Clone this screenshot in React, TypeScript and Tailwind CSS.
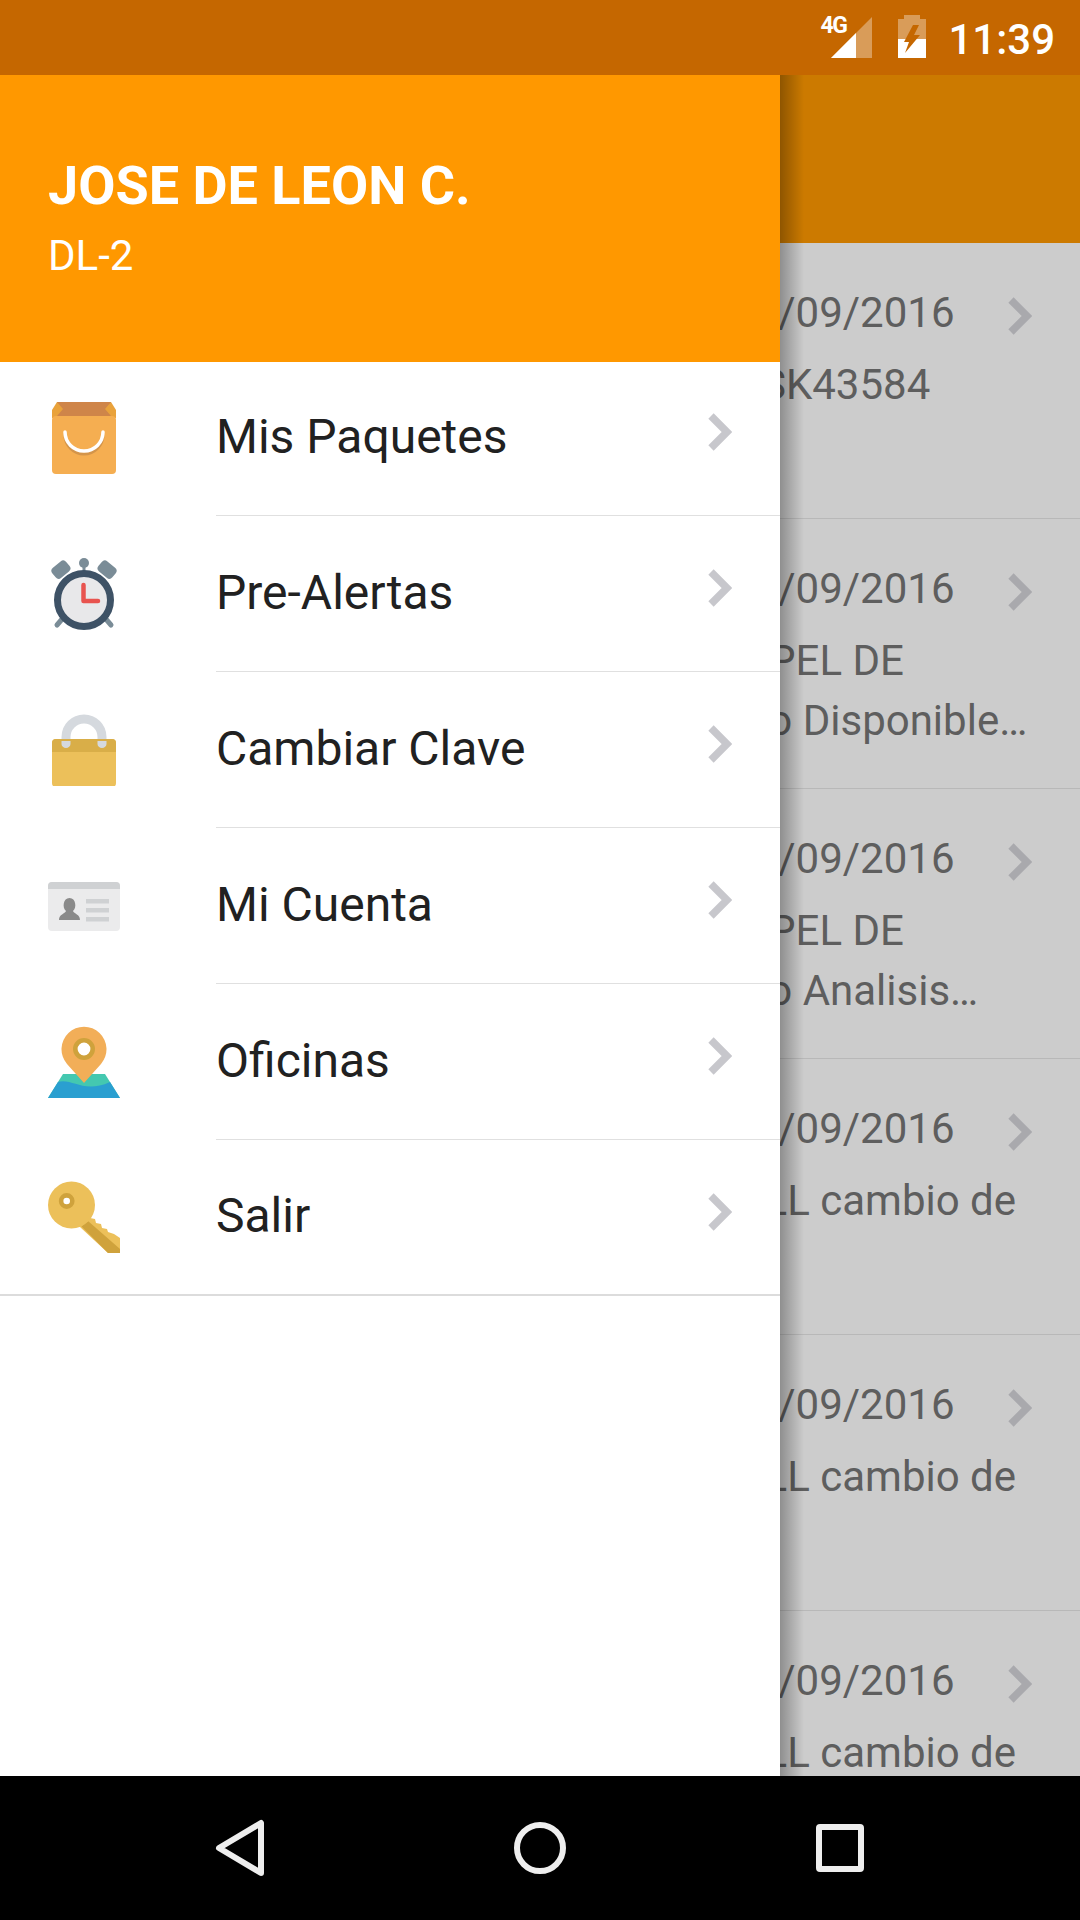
const menuItems = [
  { name: "Mis Paquetes", icon: <BagIcon /> },
  { name: "Pre-Alertas", icon: <ClockIcon /> },
  { name: "Cambiar Clave", icon: <LockIcon /> },
  { name: "Mi Cuenta", icon: <CardIcon /> },
  { name: "Oficinas", icon: <MapIcon /> },
  { name: "Salir", icon: <KeyIcon /> },
];

const date = { text: "16/09/2016", className: "" };
const bill = { text: "BILL cambio de", className: "mt-[12px] -ml-[4px]" };
const papel = { text: "PAPEL DE", className: "mt-[12px] -ml-[13px]" };

const listRows = [
  { height: "h-[276px]", lines: [date, { text: "HSK43584", className: "mt-[12px]" }] },
  { height: "h-[270px]", lines: [date, papel, { text: "cto Disponible…", className: "ml-[2px]" }] },
  { height: "h-[270px]", lines: [date, papel, { text: "cto Analisis…", className: "ml-[2px]" }] },
  { height: "h-[276px]", lines: [date, bill] },
  { height: "h-[276px]", lines: [date, bill] },
  { height: "h-[276px]", lines: [date, bill] },
];

function BagIcon() {
  return (
    <svg width="72" height="72" viewBox="0 0 72 72">
      <polygon points="9,0 4,8 4,16 68,16 68,8 63,0" fill="#e9a23b" />
      <polygon points="9,0 63,0 57,7 63,14 9,14 15,7" fill="#cf8549" />
      <rect x="4" y="14" width="64" height="58" rx="4" fill="#f5ae51" />
      <path d="M17 33 A19 19 0 0 0 55 33" fill="none" stroke="#d4954a" strokeWidth="3" />
      <path d="M17 30 A19 19 0 0 0 55 30" fill="none" stroke="#ffffff" strokeWidth="3.5" strokeLinecap="round" />
    </svg>
  );
}

function ClockIcon() {
  return (
    <svg width="72" height="72" viewBox="0 0 72 72">
      <rect x="27" y="-9" width="18" height="13" rx="4" transform="rotate(-40 36 36) translate(-2 5)" fill="#7a8c97" />
      <rect x="27" y="-9" width="18" height="13" rx="4" transform="rotate(40 36 36) translate(2 5)" fill="#7a8c97" />
      <circle cx="36" cy="5" r="5" fill="#7a8c97" />
      <rect x="34.5" y="6" width="3" height="8" fill="#7a8c97" />
      <path d="M15 60 L9 67 M57 60 L63 67" stroke="#7a8c97" strokeWidth="5" strokeLinecap="round" />
      <circle cx="36" cy="42" r="26.5" fill="#e8e8ea" stroke="#3e5266" strokeWidth="7" />
      <path d="M35.5 27 V43 H50" fill="none" stroke="#e8534f" strokeWidth="4.5" strokeLinecap="round" strokeLinejoin="round" />
    </svg>
  );
}

function LockIcon() {
  return (
    <svg width="72" height="72" viewBox="0 0 72 72">
      <path d="M18 36 V23 A18 18 0 0 1 54 23 V36" fill="none" stroke="#d5d9de" strokeWidth="9" />
      <rect x="4" y="25" width="64" height="48" rx="4" fill="#ecc05a" />
      <path d="M4 38 V29 A4 4 0 0 1 8 25 H64 A4 4 0 0 1 68 29 V38 Z" fill="#d9ae48" />
      <path d="M13.5 27 V30 A4.5 4 0 0 0 22.5 30 V27 Z M49.5 27 V30 A4.5 4 0 0 0 58.5 30 V27 Z" fill="#d5d9de" />
    </svg>
  );
}

function CardIcon() {
  return (
    <svg width="72" height="72" viewBox="0 0 72 72">
      <rect x="0" y="12" width="72" height="49" rx="4" fill="#ebebec" />
      <path d="M0 19 V16 A4 4 0 0 1 4 12 H68 A4 4 0 0 1 72 16 V19 Z" fill="#cfd1d3" />
      <path d="M11 50 C11 44 17 44 18 41 C14 38 15 28 21.5 28 C28 28 29 38 25 41 C26 44 32 44 32 50 Z" fill="#8a8a8a" />
      <rect x="38" y="29" width="23" height="4.5" fill="#cfd1d3" />
      <rect x="38" y="38" width="23" height="4.5" fill="#cfd1d3" />
      <rect x="38" y="47" width="23" height="4.5" fill="#cfd1d3" />
    </svg>
  );
}

function MapIcon() {
  return (
    <svg width="72" height="72" viewBox="0 0 72 72">
      <polygon points="15,48 57,48 72,72 0,72" fill="#44c8b0" />
      <path d="M0 72 L10 56 C24 52 36 68 62 56 L72 72 Z" fill="#2a9fd0" />
      <path d="M36 57 L19 38 A22.5 22.5 0 1 1 53 38 Z" fill="#f2ae58" />
      <circle cx="36" cy="23" r="8.7" fill="#ffffff" stroke="#cfa23c" strokeWidth="4.6" />
    </svg>
  );
}

function KeyIcon() {
  return (
    <svg width="72" height="72" viewBox="0 0 72 72">
      <polygon points="36,31 42,34 42,37 47,38 48,42 53,43 54,47 59,48 60,51 66,53 72,57 72,72 60,72 32,46" fill="#ecc05a" />
      <polygon points="33.5,45.5 40,40 72,68 72,72 60,72" fill="#cfa23c" />
      <circle cx="23.5" cy="24" r="23.5" fill="#ecc05a" />
      <circle cx="18.7" cy="20" r="5.6" fill="#ffffff" stroke="#cfa23c" strokeWidth="4.6" />
    </svg>
  );
}

const Chevron = ({ color }: { color: string }) => (
  <svg width="24" height="38" viewBox="0 0 24 38">
    <path d="M3 3 L19 19 L3 35" fill="none" stroke={color} strokeWidth="7.5" />
  </svg>
);

const StatusIcons = () => (
  <div className="flex items-start">
    <div className="relative w-[52px] h-[58px]">
      <span className="absolute left-[-11px] top-[13px] text-[23px] leading-[26px] font-bold text-white tracking-[-1.5px]">
        4G
      </span>
      <svg className="absolute left-0 top-[17px]" width="42" height="41" viewBox="0 0 42 41">
        <polygon points="0,41 41,0 41,41" fill="#ffffff" fillOpacity="0.35" />
        <polygon points="0,41 25,16 25,41" fill="#ffffff" />
      </svg>
    </div>
    <svg className="mt-[15px] ml-[15px]" width="28" height="43" viewBox="0 0 28 43">
      <path d="M6 0 H22 V4 H28 V24 H0 V4 H6 Z" fill="#ffffff" fillOpacity="0.35" />
      <path d="M0 24 H28 V43 H0 Z" fill="#ffffff" />
      <path d="M15 10 L6 27 H11 L7 38 L22 20 H16 L21 10 Z" fill="#c56700" />
    </svg>
  </div>
);

export default function App() {
  return (
    <div className="w-[1080px] h-[1920px] flex flex-col overflow-hidden font-['Roboto',sans-serif]">
      {/* Status bar */}
      <div className="h-[75px] shrink-0 bg-[#c56700] flex justify-end pr-[25px]">
        <StatusIcons />
        <span className="ml-[22px] mt-[16px] text-[42px] leading-[48px] font-medium text-white">11:39</span>
      </div>

      <div className="relative flex-1 overflow-hidden bg-[#cccccc]">
        {/* App content behind the drawer */}
        <div className="h-[168px] bg-[#cc7a00]" />
        {listRows.map((row, i) => (
          <div key={i} className={`${row.height} box-border border-b border-[#b8b8b8] pl-[731px] pr-[48px] pt-[40px] flex`}>
            <div className="flex-1 w-0 text-[42px] leading-[60px] text-[#5e5e5e] whitespace-nowrap">
              {row.lines.map((line, j) => (
                <div key={j} className={line.className}>
                  {line.text}
                </div>
              ))}
            </div>
            <div className="mt-[14px]">
              <Chevron color="#a9a9ad" />
            </div>
          </div>
        ))}

        {/* Drawer shadow */}
        <div className="absolute top-0 bottom-0 left-[780px] w-[24px] bg-gradient-to-r from-black/30 to-transparent" />

        {/* Drawer */}
        <div className="absolute top-0 bottom-0 left-0 w-[780px] bg-white flex flex-col">
          <div className="h-[287px] shrink-0 bg-[#ff9800] pl-[48px] pt-[79px] text-white">
            <div className="text-[54px] leading-[64px] font-bold">JOSE DE LEON C.</div>
            <div className="mt-[14px] text-[42px] leading-[48px]">DL-2</div>
          </div>
          <div className="-mt-[2px]">
            {menuItems.map((item, i) => (
              <div
                key={item.name}
                className={`h-[156px] box-border flex items-center relative ${i === menuItems.length - 1 ? "border-b-2 border-[#dcdcdc]" : ""}`}
              >
                <div className="ml-[48px] -mt-[1px] w-[72px] h-[72px]">{item.icon}</div>
                <div className={`ml-[96px] flex-1 h-full box-border flex items-center justify-between pr-[48px] pb-[2px] ${i === menuItems.length - 1 ? "" : "border-b border-[#e0e0e0]"}`}>
                  <span className="text-[48px] leading-[56px] text-[#212121]">{item.name}</span>
                  <div className="-mt-[9px]">
                    <Chevron color="#c7c7cc" />
                  </div>
                </div>
              </div>
            ))}
          </div>
        </div>
      </div>

      {/* Nav bar */}
      <div className="h-[144px] shrink-0 bg-black flex justify-center items-center">
        <div className="w-[300px] flex justify-center">
          <svg width="54" height="60" viewBox="0 0 54 60">
            <path d="M48 5 V55 L6 30 Z" fill="none" stroke="#eeeeee" strokeWidth="6" strokeLinejoin="round" />
          </svg>
        </div>
        <div className="w-[300px] flex justify-center">
          <div className="w-[52px] h-[52px] rounded-full border-[6px] border-[#eeeeee]" />
        </div>
        <div className="w-[300px] flex justify-center">
          <div className="w-[48px] h-[48px] rounded-[4px] border-[6px] border-[#eeeeee]" />
        </div>
      </div>
    </div>
  );
}
